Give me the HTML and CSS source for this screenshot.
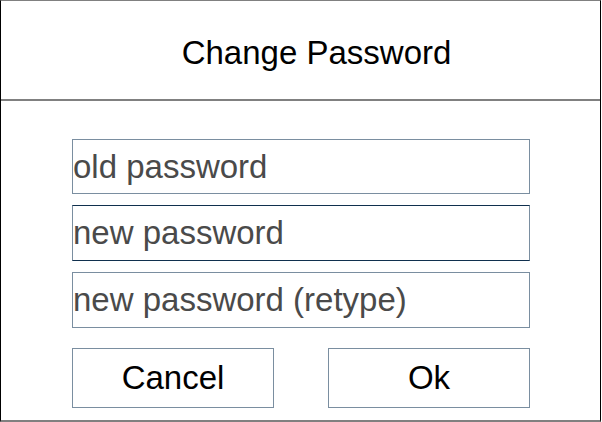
FILE: index.html
```html
<!DOCTYPE html>
<html>
<head>
<meta charset="utf-8">
<link rel="stylesheet" href="styles.css">
</head>
<body>
<div class="dialog">
  <div class="header"><span class="title">Change Password</span></div>
  <div class="content">
    <input class="field" type="password" placeholder="old password">
    <input class="field field-active" type="password" placeholder="new password">
    <input class="field" type="password" placeholder="new password (retype)">
    <div class="buttons">
      <button class="btn">Cancel</button>
      <button class="btn">Ok</button>
    </div>
  </div>
</div>
</body>
</html>
```
FILE: styles.css
```css
html, body {
  margin: 0;
  padding: 0;
  background: #fff;
}
body {
  width: 602px;
  height: 422px;
  overflow: hidden;
  font-family: "Liberation Sans", Arial, sans-serif;
}
.dialog {
  box-sizing: border-box;
  width: 601px;
  height: 422px;
  border-left: 1px solid #000;
  border-right: 1px solid #000;
  border-top: 1px solid #808080;
  border-bottom: 2px solid #808080;
  display: flex;
  flex-direction: column;
}
.header {
  box-sizing: border-box;
  height: 100px;
  border-bottom: 2px solid #808080;
  display: flex;
  align-items: center;
  justify-content: center;
  padding-left: 32px;
  padding-top: 5px;
}
.title {
  font-size: 33px;
  color: #000;
}
.content {
  display: flex;
  flex-direction: column;
  padding: 38px 0 0 71px;
}
.field {
  box-sizing: border-box;
  width: 458px;
  height: 55px;
  margin: 0 0 11px 0;
  padding: 0;
  border: 1px solid #7a8ea0;
  outline: none;
  background: #fff;
  font-family: "Liberation Sans", Arial, sans-serif;
  font-size: 33px;
  color: #444;
}
.field + .field {
  height: 56px;
}
.field::placeholder {
  color: #4a4a4a;
  opacity: 1;
}
.field-active {
  border-top-color: #10304e;
  border-bottom-color: #10304e;
}
.buttons {
  display: flex;
  justify-content: space-between;
  width: 458px;
  margin-top: 9px;
}
.btn {
  box-sizing: border-box;
  width: 202px;
  height: 60px;
  border: 1px solid #7a8ea0;
  background: #fff;
  font-family: "Liberation Sans", Arial, sans-serif;
  font-size: 33px;
  color: #000;
  padding: 0;
}
```
